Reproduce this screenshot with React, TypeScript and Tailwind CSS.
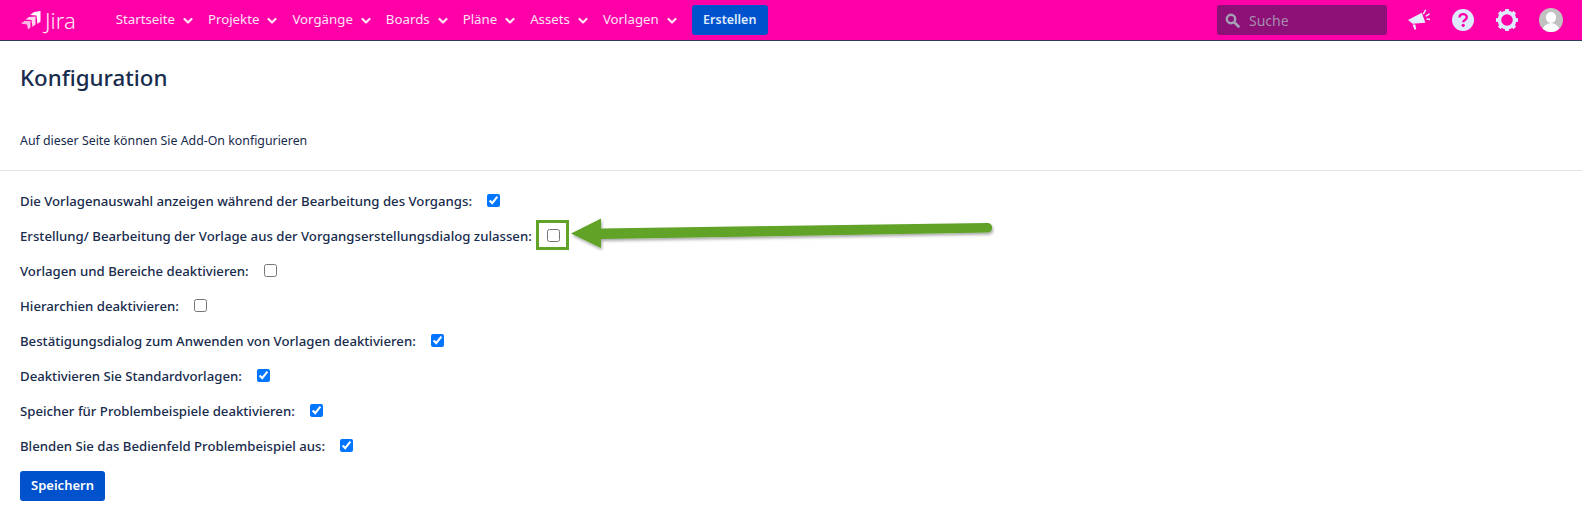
import React from "react";

const font = { fontFamily: '"Noto Sans", "Open Sans", sans-serif' };

const navItems = ["Startseite", "Projekte", "Vorgänge", "Boards", "Pläne", "Assets", "Vorlagen"];

const rows: { label: string; checked: boolean }[] = [
  { label: "Die Vorlagenauswahl anzeigen während der Bearbeitung des Vorgangs:", checked: true },
  { label: "Erstellung/ Bearbeitung der Vorlage aus der Vorgangserstellungsdialog zulassen:", checked: false },
  { label: "Vorlagen und Bereiche deaktivieren:", checked: false },
  { label: "Hierarchien deaktivieren:", checked: false },
  { label: "Bestätigungsdialog zum Anwenden von Vorlagen deaktivieren:", checked: true },
  { label: "Deaktivieren Sie Standardvorlagen:", checked: true },
  { label: "Speicher für Problembeispiele deaktivieren:", checked: true },
  { label: "Blenden Sie das Bedienfeld Problembeispiel aus:", checked: true },
];

function Chevron() {
  return (
    <svg width="10" height="8" viewBox="0 0 10 8" className="ml-[8px] mt-[1px]" fill="none">
      <path d="M1.5 2 L5 5.5 L8.5 2" stroke="#ffe3f4" strokeWidth="2.2" strokeLinecap="round" strokeLinejoin="round" />
    </svg>
  );
}

function Logo() {
  return (
    <div className="flex items-center gap-[4px]">
      <svg width="20" height="20" viewBox="0 0 20 20">
        <path d="M19.5 1 L19.5 11.5 L16.5 14 L15.5 5.5 L9 5 L13 2 Z" fill="#ffffff" />
        <path d="M14.5 6.5 L14.5 14.5 L11.5 17 L10.5 10 L4.5 9.5 L8 7 Z" fill="#ffd8f0" />
        <path d="M9.5 11 L9.5 17.5 L7 19.5 L6 14.5 L0 13.5 L3.5 11 Z" fill="#ffb8e4" />
      </svg>
      <span className="text-[22px] leading-none text-[#ffe8f6] font-light">Jira</span>
    </div>
  );
}

export default function App() {
  return (
    <div className="min-h-[530px] bg-white text-[#172b4d] relative" style={font}>
      <header className="h-[41px] bg-[#ff00a8] border-b border-[#2b3a55] flex items-center pl-[21px] pr-[19px]">
        <Logo />
        <nav className="flex items-center ml-[40px] gap-[15px]">
          {navItems.map((n) => (
            <div key={n} className="flex items-center text-[13.25px] text-[#ffe3f4]">
              {n}
              <Chevron />
            </div>
          ))}
        </nav>
        <button className="ml-[15px] h-[30px] w-[76px] rounded-[3px] bg-[#0052cc] text-[12.5px] font-semibold text-[#deebff]">
          Erstellen
        </button>
        <div className="ml-auto w-[170px] h-[30px] rounded-[3px] bg-[#8c1075] flex items-center pl-[8px] mr-[21px]">
          <svg width="15" height="15" viewBox="0 0 15 15" fill="none">
            <circle cx="6" cy="6" r="4.2" stroke="#a5a0b5" strokeWidth="2.4" />
            <path d="M9.5 9.5 L13.5 13.5" stroke="#a5a0b5" strokeWidth="2.6" strokeLinecap="round" />
          </svg>
          <span className="ml-[9px] text-[14px] text-[#a58fb0]">Suche</span>
        </div>
        <svg width="22" height="22" viewBox="0 0 24 22">
          <path d="M0 11 L15 3 L19 14 L5 15 Z" fill="#e3eeff" />
          <path d="M5 16 L8 16 L9 21 L7 21.5 Z" fill="#e3eeff" />
          <path d="M17 4 L19 0.5 M20 6.5 L23 4.5 M21 10 L24 10.5" stroke="#e3eeff" strokeWidth="1.6" strokeLinecap="round" />
        </svg>
        <svg width="22" height="22" viewBox="0 0 22 22" className="ml-[22px]">
          <circle cx="11" cy="11" r="11" fill="#deebff" />
          <path d="M7.5 8.5 C7.5 3.8 14.8 4 14.8 8.3 C14.8 11 11.2 10.8 11.2 13.2" fill="none" stroke="#ff00a8" strokeWidth="2.3" />
          <circle cx="11.2" cy="16.3" r="1.6" fill="#ff00a8" />
        </svg>
        <svg width="24" height="24" viewBox="0 0 24 24" className="ml-[21px]">
          <circle cx="12" cy="12" r="7.6" fill="none" stroke="#deebff" strokeWidth="3.6" />
          <g stroke="#deebff" strokeWidth="3.8">
            <path d="M12 1 V4" />
            <path d="M12 20 V23" />
            <path d="M1 12 H4" />
            <path d="M20 12 H23" />
            <path d="M4.2 4.2 L6.3 6.3" />
            <path d="M17.7 17.7 L19.8 19.8" />
            <path d="M4.2 19.8 L6.3 17.7" />
            <path d="M17.7 6.3 L19.8 4.2" />
          </g>
        </svg>
        <div className="ml-[20px] w-[24px] h-[24px] rounded-full bg-[#c1c1c1] overflow-hidden relative">
          <div className="absolute left-[7px] top-[4px] w-[10px] h-[11px] rounded-full bg-white" />
          <div className="absolute left-[3px] top-[15px] w-[18px] h-[12px] rounded-t-full bg-white" />
        </div>
      </header>

      <div className="px-[20px] h-[130px] border-b border-[#e4e4e4]">
        <h1 className="pt-[22px] text-[22.3px] leading-[30px] font-medium text-[#172b4d]">Konfiguration</h1>
        <p className="mt-[39px] text-[12.35px] leading-[18px]">Auf dieser Seite können Sie Add-On konfigurieren</p>
      </div>

      <form className="px-[20px] pt-[13px]">
        {rows.map((r) => (
          <label key={r.label} className="flex items-center h-[35px] text-[13.2px] font-medium">
            <span>{r.label}</span>
            <input
              type="checkbox"
              defaultChecked={r.checked}
              className="ml-[15px] w-[13px] h-[13px] -mt-[2px]"
            />
          </label>
        ))}
        <button type="button" className="mt-[7px] h-[30px] w-[85px] rounded-[3px] bg-[#0052cc] text-[13px] font-semibold text-white">
          Speichern
        </button>
      </form>

      <div className="absolute left-[536px] top-[220px] w-[33px] h-[30px] border-[3px] border-[#60a328]" />
      <svg className="absolute left-[565px] top-[210px]" width="440" height="50" viewBox="0 0 440 50">
        <defs>
          <filter id="s" x="-5%" y="-40%" width="110%" height="200%">
            <feDropShadow dx="1" dy="2" stdDeviation="1.5" floodColor="#000" floodOpacity="0.35" />
          </filter>
        </defs>
        <path
          d="M6 23.5 L36 8.5 L36 18.5 L423 13 A4.8 4.8 0 0 1 423 22.5 L36 29 L36 38 Z"
          fill="#60a328"
          filter="url(#s)"
        />
      </svg>
    </div>
  );
}
